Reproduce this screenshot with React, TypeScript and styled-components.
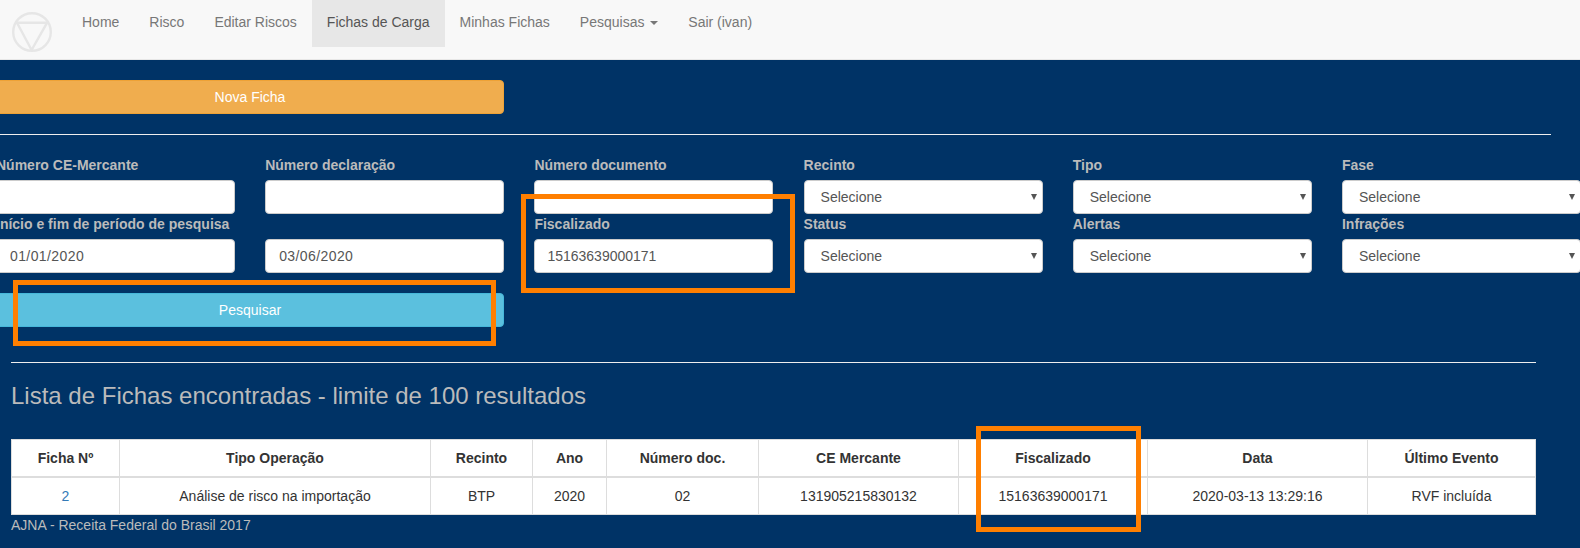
import styled, { createGlobalStyle } from "styled-components";

const GlobalStyle = createGlobalStyle`
  html, body {
    margin: 0;
    padding: 0;
    background: #003366;
  }
  * {
    box-sizing: border-box;
  }
`;

const Page = styled.div`
  position: relative;
  width: 1580px;
  height: 548px;
  overflow: hidden;
  background: #003366;
  color: #bbb;
  font-family: "Liberation Sans", Arial, sans-serif;
  font-size: 14px;
  line-height: 20px;
`;

const Navbar = styled.nav`
  display: flex;
  align-items: flex-start;
  height: 60px;
  background: #f8f8f8;
  border-bottom: 1px solid #e7e7e7;
  margin-bottom: 20px;
`;

const Brand = styled.div`
  display: flex;
  width: 67px;
  padding: 12px 0 0 12px;
`;

const NavLink = styled.a<{ $active?: boolean }>`
  display: block;
  padding: 12px 15px 15px;
  color: ${({ $active }) => ($active ? "#555" : "#777")};
  background: ${({ $active }) => ($active ? "#e7e7e7" : "transparent")};
`;

const Caret = styled.span`
  display: inline-block;
  width: 0;
  height: 0;
  margin-left: 2px;
  vertical-align: middle;
  border-top: 4px solid #777;
  border-right: 4px solid transparent;
  border-left: 4px solid transparent;
`;

const SearchArea = styled.div`
  margin-left: -4px;
  width: 1584px;
`;

const ActionButton = styled.button<{ $kind: "warning" | "info" }>`
  display: block;
  width: 508px;
  height: 34px;
  padding: 6px 12px;
  font: inherit;
  color: #fff;
  border-radius: 4px;
  background: ${({ $kind }) => ($kind === "warning" ? "#f0ad4e" : "#5bc0de")};
  border: 1px solid ${({ $kind }) => ($kind === "warning" ? "#eea236" : "#46b8da")};
`;

const TopRule = styled.hr`
  width: 1555px;
  height: 1px;
  margin: 20px 0;
  border: 0;
  background: #eee;
`;

const FilterGrid = styled.div`
  display: grid;
  grid-template-columns: repeat(6, 239px);
  column-gap: 30.2px;
`;

const Field = styled.div`
  min-width: 0;
`;

const FieldLabel = styled.label`
  display: block;
  height: 20px;
  margin-bottom: 5px;
  font-weight: 700;
  white-space: nowrap;
`;

const TextInput = styled.input<{ $date?: boolean }>`
  display: block;
  width: 100%;
  height: 34px;
  padding: 6px 12px 6px ${({ $date }) => ($date ? "13px" : "12px")};
  font: inherit;
  letter-spacing: ${({ $date }) => ($date ? "0.4px" : "normal")};
  color: #555;
  background: #fff;
  border: 1px solid #ccc;
  border-radius: 4px;
`;

const SelectBox = styled.div`
  position: relative;
  &::after {
    content: "";
    position: absolute;
    top: 14px;
    right: 6px;
    border-top: 6px solid #555;
    border-right: 3px solid transparent;
    border-left: 3px solid transparent;
    pointer-events: none;
  }
`;

const SelectInput = styled.select`
  display: block;
  width: 100%;
  height: 34px;
  padding: 6px 12px;
  font: inherit;
  color: #555;
  background: #fff;
  border: 1px solid #ccc;
  border-radius: 4px;
  appearance: none;
  text-indent: 4px;
`;

const SearchRow = styled.div`
  margin-top: 20px;
`;

const Results = styled.div`
  width: 1525px;
  margin-left: 11px;
`;

const BottomRule = styled.hr`
  height: 1px;
  margin: 35px 0 20px;
  border: 0;
  background: #eee;
`;

const Heading = styled.h3`
  margin: 0 0 30px;
  font-size: 24px;
  font-weight: 500;
  line-height: 26.4px;
`;

const Table = styled.table`
  width: 1524px;
  table-layout: fixed;
  border-collapse: collapse;
  background: #fff;
  color: #333;
  text-align: center;
  border: 1px solid #ddd;
`;

const HeadCell = styled.th`
  padding: 8px;
  font-weight: 700;
  border: 1px solid #ddd;
  border-bottom: 2px solid #ddd;
`;

const BodyCell = styled.td`
  padding: 8px;
  border: 1px solid #ddd;
`;

const RowLink = styled.a`
  color: #337ab7;
`;

const Footer = styled.div`
  height: 20px;
`;

const Marker = styled.div<{ $x: number; $y: number; $w: number; $h: number }>`
  position: absolute;
  left: ${({ $x }) => $x}px;
  top: ${({ $y }) => $y}px;
  width: ${({ $w }) => $w}px;
  height: ${({ $h }) => $h}px;
  border: 5px solid #ff7f00;
`;

const columns = [
  { title: "Ficha Nº", width: 108 },
  { title: "Tipo Operação", width: 311 },
  { title: "Recinto", width: 102 },
  { title: "Ano", width: 74 },
  { title: "Número doc.", width: 152 },
  { title: "CE Mercante", width: 200 },
  { title: "Fiscalizado", width: 189 },
  { title: "Data", width: 220 },
  { title: "Último Evento", width: 168 },
];

const rowValues = [
  "Análise de risco na importação",
  "BTP",
  "2020",
  "02",
  "131905215830132",
  "15163639000171",
  "2020-03-13 13:29:16",
  "RVF incluída",
];

const Logo = () => (
  <svg width="40" height="40" viewBox="0 0 40 40" fill="none" stroke="#e6e6e6" strokeWidth="2.4">
    <circle cx="20" cy="20" r="18.8" />
    <path d="M5 10.8H35L19.6 38Z" strokeLinejoin="round" />
  </svg>
);

const TextField = ({ label, value, date }: { label?: string; value?: string; date?: boolean }) => (
  <Field>
    <FieldLabel>{label}</FieldLabel>
    <TextInput readOnly $date={date} value={value ?? ""} />
  </Field>
);

const SelectField = ({ label }: { label: string }) => (
  <Field>
    <FieldLabel>{label}</FieldLabel>
    <SelectBox>
      <SelectInput defaultValue="">
        <option value="">Selecione</option>
      </SelectInput>
    </SelectBox>
  </Field>
);

const App = () => {
  return (
    <Page>
      <GlobalStyle />
      <Navbar>
        <Brand>
          <Logo />
        </Brand>
        <NavLink>Home</NavLink>
        <NavLink>Risco</NavLink>
        <NavLink>Editar Riscos</NavLink>
        <NavLink $active>Fichas de Carga</NavLink>
        <NavLink>Minhas Fichas</NavLink>
        <NavLink>
          Pesquisas <Caret />
        </NavLink>
        <NavLink>Sair (ivan)</NavLink>
      </Navbar>

      <SearchArea>
        <ActionButton $kind="warning">Nova Ficha</ActionButton>
        <TopRule />
        <FilterGrid>
          <TextField label="Número CE-Mercante" />
          <TextField label="Número declaração" />
          <TextField label="Número documento" />
          <SelectField label="Recinto" />
          <SelectField label="Tipo" />
          <SelectField label="Fase" />
          <TextField label="Início e fim de período de pesquisa" value="01/01/2020" date />
          <TextField value="03/06/2020" date />
          <TextField label="Fiscalizado" value="15163639000171" />
          <SelectField label="Status" />
          <SelectField label="Alertas" />
          <SelectField label="Infrações" />
        </FilterGrid>
        <SearchRow>
          <ActionButton $kind="info">Pesquisar</ActionButton>
        </SearchRow>
      </SearchArea>

      <Results>
        <BottomRule />
        <Heading>Lista de Fichas encontradas - limite de 100 resultados</Heading>
        <Table>
          <colgroup>
            {columns.map((column) => (
              <col key={column.title} width={column.width} />
            ))}
          </colgroup>
          <thead>
            <tr>
              {columns.map((column) => (
                <HeadCell key={column.title}>{column.title}</HeadCell>
              ))}
            </tr>
          </thead>
          <tbody>
            <tr>
              <BodyCell>
                <RowLink>2</RowLink>
              </BodyCell>
              {rowValues.map((value) => (
                <BodyCell key={value}>{value}</BodyCell>
              ))}
            </tr>
          </tbody>
        </Table>
        <Footer>AJNA - Receita Federal do Brasil 2017</Footer>
      </Results>

      <Marker $x={521} $y={194} $w={274} $h={99} />
      <Marker $x={13} $y={280} $w={483} $h={66} />
      <Marker $x={976} $y={426} $w={165} $h={106} />
    </Page>
  );
};

export default App;
